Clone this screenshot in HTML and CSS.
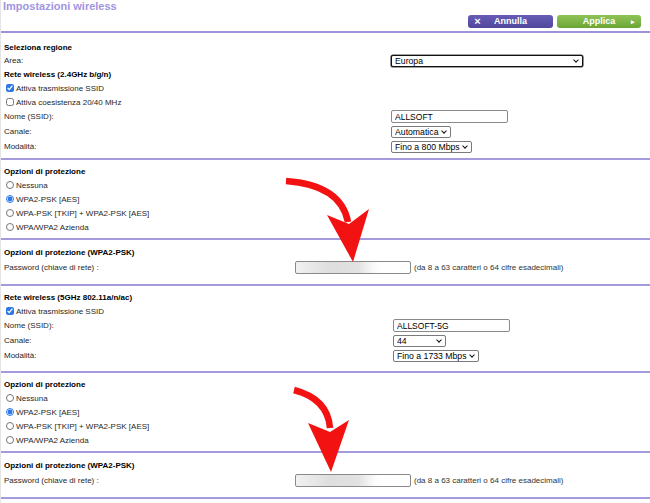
FILE: index.html
```html
<!DOCTYPE html>
<html lang="it">
<head>
    <meta charset="UTF-8">
    <title>Impostazioni wireless</title>
    <link rel="stylesheet" href="styles.css">
</head>
<body>
    <div id="page">
        <header class="topbar">
            <h1 class="title">Impostazioni wireless</h1>
            <div class="actions">
                <button class="btn btnCancel"><span class="btnIcon iconX">&times;</span><span>Annulla</span><span></span></button>
                <button class="btn btnApply"><span></span><span>Applica</span><span class="btnIcon">&#x25B8;</span></button>
            </div>
        </header>

        <!-- 2.4 GHz -->
        <section class="block blockRegion">
            <div class="row rowHead"><b>Seleziona regione</b></div>
            <div class="row rowText">
                <span class="label">Area:</span>
                <span class="selWrap selArea"><select class="sel"><option>Europa</option></select></span>
            </div>
            <div class="row rowHead rowHeadWide"><b>Rete wireless (2.4GHz b/g/n)</b></div>
            <div class="row rowCheck">
                <input type="checkbox" checked><span>Attiva trasmissione SSID</span>
            </div>
            <div class="row rowCheck">
                <input type="checkbox"><span>Attiva coesistenza 20/40 MHz</span>
            </div>
            <div class="row rowField">
                <span class="label">Nome (SSID):</span>
                <input type="text" class="txt" value="ALLSOFT">
            </div>
            <div class="row rowField">
                <span class="label">Canale:</span>
                <span class="selWrap selChannel"><select class="sel"><option>Automatica</option></select></span>
            </div>
            <div class="row rowField">
                <span class="label">Modalità:</span>
                <span class="selWrap selMode"><select class="sel"><option>Fino a 800 Mbps</option></select></span>
            </div>
        </section>

        <section class="block blockSecurity">
            <div class="row rowHead"><b>Opzioni di protezione</b></div>
            <div class="row rowRadio"><input type="radio" name="sec24"><span>Nessuna</span></div>
            <div class="row rowRadio"><input type="radio" name="sec24" checked><span>WPA2-PSK [AES]</span></div>
            <div class="row rowRadio"><input type="radio" name="sec24"><span>WPA-PSK [TKIP] + WPA2-PSK [AES]</span></div>
            <div class="row rowRadio"><input type="radio" name="sec24"><span>WPA/WPA2 Azienda</span></div>
        </section>

        <section class="block blockPassword">
            <div class="row rowHeadTall"><b>Opzioni di protezione (WPA2-PSK)</b></div>
            <div class="row rowPass">
                <span class="label labelPass">Password (chiave di rete) :</span>
                <input type="text" class="txt txtPass">
                <span class="hint">(da 8 a 63 caratteri o 64 cifre esadecimali)</span>
            </div>
        </section>

        <!-- 5 GHz -->
        <section class="block block5g">
            <div class="row rowHead"><b>Rete wireless (5GHz 802.11a/n/ac)</b></div>
            <div class="row rowCheck">
                <input type="checkbox" checked><span>Attiva trasmissione SSID</span>
            </div>
            <div class="row rowField">
                <span class="label label5g">Nome (SSID):</span>
                <input type="text" class="txt" value="ALLSOFT-5G">
            </div>
            <div class="row rowField">
                <span class="label label5g">Canale:</span>
                <span class="selWrap selChannel5g"><select class="sel"><option>44</option></select></span>
            </div>
            <div class="row rowField">
                <span class="label label5g">Modalità:</span>
                <span class="selWrap selMode5g"><select class="sel"><option>Fino a 1733 Mbps</option></select></span>
            </div>
        </section>

        <section class="block blockSecurity">
            <div class="row rowHead"><b>Opzioni di protezione</b></div>
            <div class="row rowRadio"><input type="radio" name="sec5"><span>Nessuna</span></div>
            <div class="row rowRadio"><input type="radio" name="sec5" checked><span>WPA2-PSK [AES]</span></div>
            <div class="row rowRadio"><input type="radio" name="sec5"><span>WPA-PSK [TKIP] + WPA2-PSK [AES]</span></div>
            <div class="row rowRadio"><input type="radio" name="sec5"><span>WPA/WPA2 Azienda</span></div>
        </section>

        <section class="block blockPassword">
            <div class="row rowHeadTall"><b>Opzioni di protezione (WPA2-PSK)</b></div>
            <div class="row rowPass">
                <span class="label labelPass">Password (chiave di rete) :</span>
                <input type="text" class="txt txtPass">
                <span class="hint">(da 8 a 63 caratteri o 64 cifre esadecimali)</span>
            </div>
        </section>

        <!-- red annotation arrows -->
        <svg class="arrows" width="650" height="503" viewBox="0 0 650 503">
            <path d="M285 181 Q 340 185 347 222" fill="none" stroke="#f21212" stroke-width="6.5"/>
            <polygon points="326,215 348,224 368,209 352,262" fill="#f21212"/>
            <path d="M293 390 Q 327 399 329 428" fill="none" stroke="#f21212" stroke-width="6.5"/>
            <polygon points="307,423 329,432 348,420 330,472" fill="#f21212"/>
        </svg>
    </div>
</body>
</html>
```

FILE: styles.css
```css
* {
    box-sizing: border-box;
}
body {
    margin: 0;
    background-color: #fff;
    font-family: "Liberation Sans", Arial, sans-serif;
    font-size: 8px;
    color: #1f1f1f;
}
#page {
    position: relative;
    width: 650px;
    height: 503px;
    overflow: hidden;
    border-left: 1px solid #e4e4e4;
}

/* header */
.topbar {
    padding-left: 2px;
    padding-bottom: 3px;
    border-bottom: 2px solid #9d93da;
}
.title {
    margin: 0;
    font-size: 11px;
    line-height: 12px;
    color: #a195e0;
}
.actions {
    display: flex;
    justify-content: flex-end;
    gap: 4px;
    margin-top: 3px;
    padding-right: 9px;
}
.btn {
    display: grid;
    grid-template-columns: 16px 1fr 16px;
    align-items: center;
    height: 13px;
    padding: 0;
    border: none;
    border-radius: 3px;
    font-family: "Liberation Sans", Arial, sans-serif;
    font-size: 9px;
    font-weight: bold;
    line-height: 13px;
    color: #fff;
    text-align: center;
}
.btnCancel {
    width: 85px;
    background: linear-gradient(#675cb6, #50479c);
}
.btnApply {
    width: 84px;
    background: linear-gradient(#8dc455, #6ca536);
}
.btnIcon {
    font-size: 7px;
}
.iconX {
    font-size: 11px;
    padding-left: 3px;
}

/* blocks */
.block {
    padding-left: 3px;
    border-bottom: 2px solid #a49bdd;
}
.blockRegion {
    padding-top: 8px;
    padding-bottom: 4px;
}
.blockSecurity {
    padding-top: 5px;
    padding-bottom: 4px;
}
.blockPassword {
    padding-top: 5px;
    padding-bottom: 9px;
}
.block5g {
    padding-top: 5px;
    padding-bottom: 8px;
}

.row {
    display: flex;
    align-items: center;
    white-space: nowrap;
}
.row b {
    color: #000;
}
.rowHead, .rowText {
    height: 13px;
}
.rowHeadWide, .rowHeadTall {
    height: 14px;
}
.rowCheck, .rowRadio {
    height: 14px;
}
.rowField {
    height: 15px;
}
.rowPass {
    height: 16px;
}

.label {
    width: 387px;
}
.label5g {
    width: 389px;
}
.labelPass {
    width: 291px;
}

.rowCheck input, .rowRadio input {
    width: 8px;
    height: 8px;
    margin: 0 2px;
    accent-color: #2d78e6;
}

/* form controls */
.selWrap {
    position: relative;
    display: inline-block;
    height: 12px;
}
.selWrap::after {
    content: "";
    position: absolute;
    right: 5px;
    top: 3px;
    width: 3px;
    height: 3px;
    border-right: 1.5px solid #111;
    border-bottom: 1.5px solid #111;
    transform: rotate(45deg);
    pointer-events: none;
}
.sel {
    appearance: none;
    display: block;
    width: 100%;
    height: 12px;
    margin: 0;
    padding: 0 10px 0 3px;
    border: 1px solid #7a7a7a;
    border-radius: 2px;
    background: #fff;
    font-family: "Liberation Sans", Arial, sans-serif;
    font-size: 8.7px;
    line-height: 10px;
    color: #000;
}
.selArea {
    width: 192px;
}
.selArea .sel {
    border: 1px solid #111;
    box-shadow: 0 0 0 0.6px #444;
}
.selChannel {
    width: 60px;
}
.selMode {
    width: 81px;
}
.selChannel5g {
    width: 53px;
}
.selMode5g {
    width: 86px;
}
.txt {
    width: 117px;
    height: 13px;
    padding: 0 3px;
    border: 1px solid #8a8a8a;
    border-radius: 2px;
    font-family: "Liberation Sans", Arial, sans-serif;
    font-size: 8.5px;
    color: #000;
}
.txtPass {
    width: 116px;
    background: linear-gradient(to right, #f1f1f1 0%, #dedede 30%, #e2e2e2 55%, #fafafa 68%, #fff 75%);
}
.hint {
    margin-left: 3px;
    color: #333;
}

/* overlay */
.arrows {
    position: absolute;
    left: 0;
    top: 0;
    pointer-events: none;
}
```
